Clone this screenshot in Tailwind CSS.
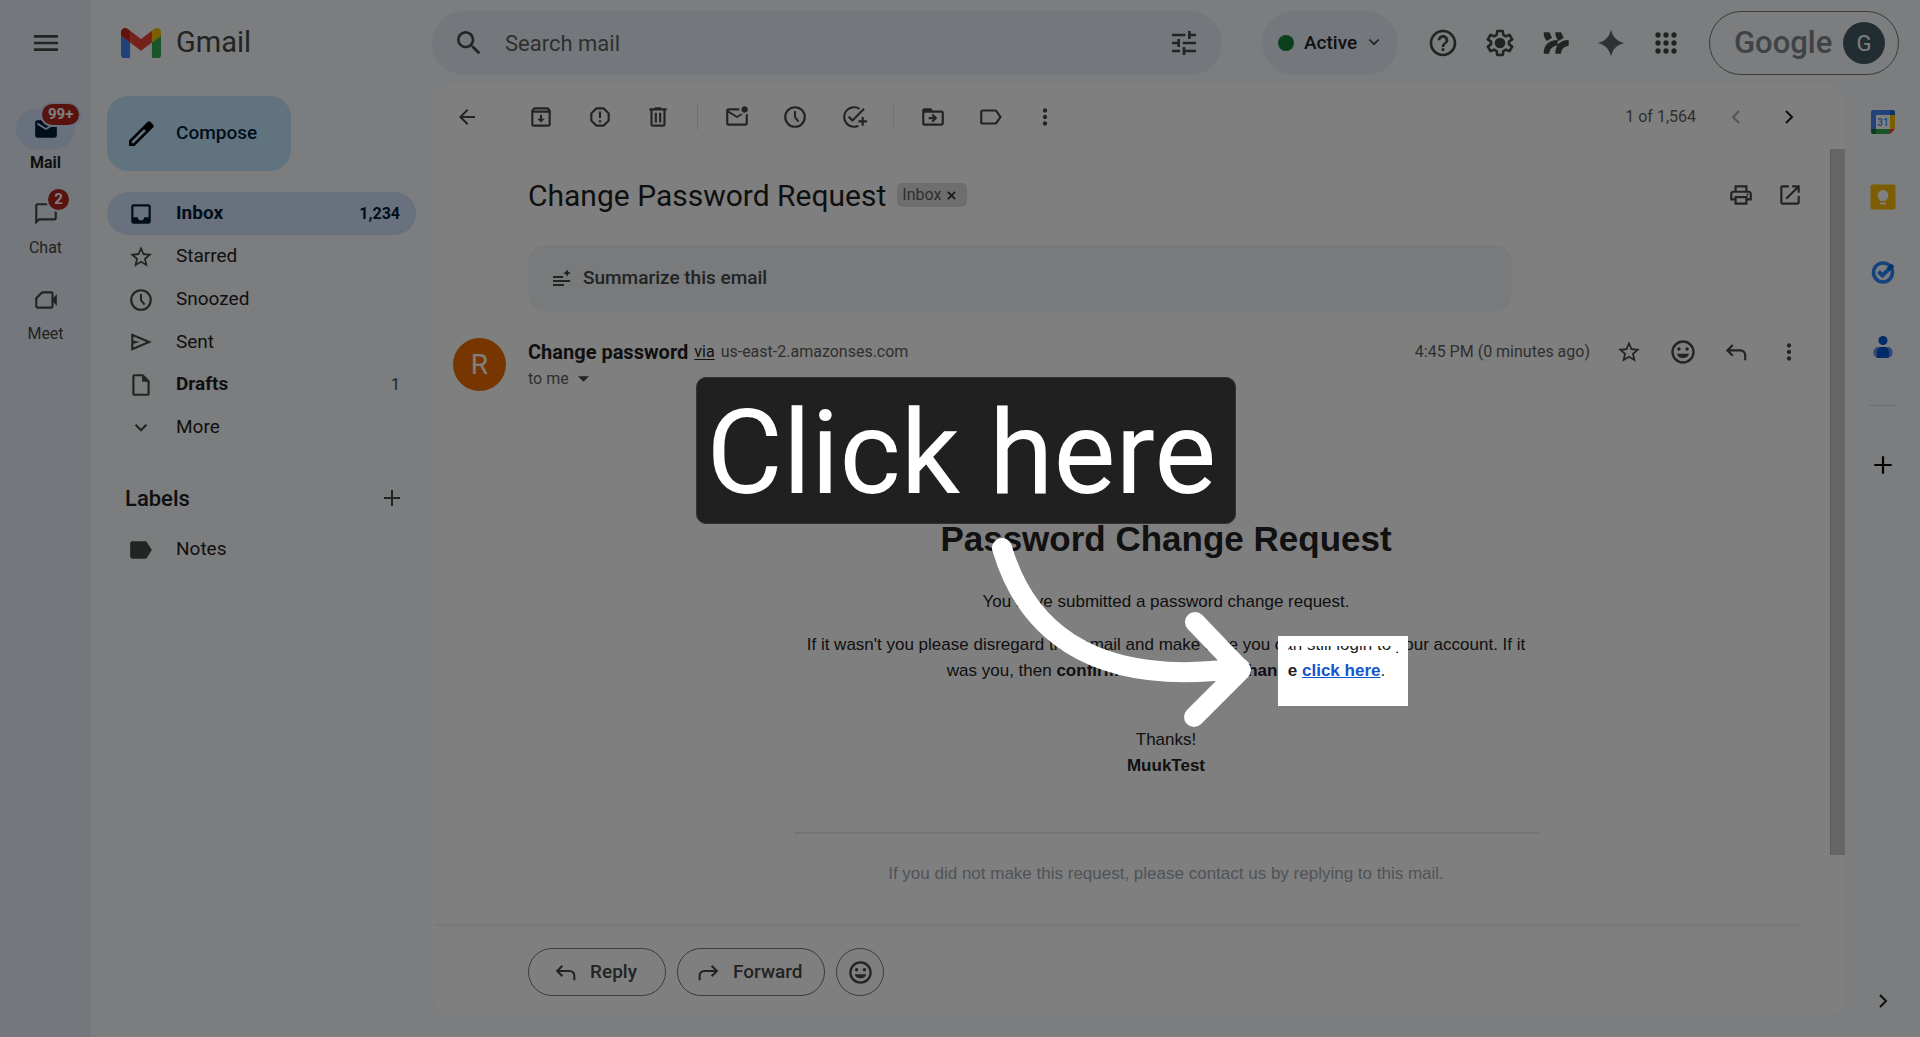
<!DOCTYPE html>
<html lang="en">
<head>
    <meta charset="UTF-8">
    <meta name="viewport" content="width=device-width, initial-scale=1">
    <title>Change Password Request - Gmail</title>
    <script src="https://cdn.jsdelivr.net/npm/@tailwindcss/browser@4"></script>
</head>
<body class="flex h-screen overflow-hidden bg-[#f8fafd] font-[Roboto,sans-serif] text-[#1f1f1f]">

    <!-- shared icons -->
    <svg class="hidden" aria-hidden="true">
        <symbol id="clock" viewBox="0 0 24 24"><circle cx="12" cy="12" r="9" fill="none" stroke="currentColor" stroke-width="2"/><path d="M12 6.500v5.700l3.300 4" fill="none" stroke="currentColor" stroke-width="1.800"/></symbol>
        <symbol id="star" viewBox="0 0 24 24"><path d="M22 9.240l-7.190-.62L12 2 9.190 8.630 2 9.240l5.460 4.730L5.820 21 12 17.270 18.180 21l-1.630-7.030L22 9.240zM12 15.400l-3.760 2.270 1-4.280-3.320-2.880 4.380-.38L12 6.100l1.710 4.040 4.380.38-3.320 2.880 1 4.280L12 15.400z"/></symbol>
        <symbol id="dots" viewBox="0 0 24 24"><circle cx="12" cy="6" r="2"/><circle cx="12" cy="12" r="2"/><circle cx="12" cy="18" r="2"/></symbol>
        <symbol id="smile" viewBox="0 0 24 24"><circle cx="12" cy="12" r="9" fill="none" stroke="currentColor" stroke-width="2"/><circle cx="8.500" cy="9.500" r="1.500"/><circle cx="15.500" cy="9.500" r="1.500"/><path d="M6.800 13.500h10.400a5.300 4.500 0 0 1-10.400 0z"/></symbol>
        <symbol id="reply" viewBox="0 0 24 24"><path d="M9 5.500L4 10.500l5 5M4.500 10.500H16a4.500 4.500 0 0 1 4.500 4.500v4.500" fill="none" stroke="currentColor" stroke-width="2"/></symbol>
        <symbol id="next" viewBox="0 0 24 24"><path d="M9 6l6 6-6 6" fill="none" stroke="currentColor" stroke-width="2"/></symbol>
        <symbol id="plus" viewBox="0 0 24 24"><path d="M11 4h2v7h7v2h-7v7h-2v-7H4v-2h7z"/></symbol>
    </svg>

    <!-- app rail -->
    <aside class="flex w-[91px] shrink-0 flex-col items-center bg-[#e9eef6] text-[16px] text-[#444746]">
        <button aria-label="Main menu" class="mt-[27px] mb-[50px]">
            <svg class="size-8" viewBox="0 0 24 24" fill="currentColor"><path d="M3 18h18v-2H3v2zm0-5h18v-2H3v2zm0-7v2h18V6H3z"/></svg>
        </button>
        <a href="#mail" class="relative flex h-[85px] flex-col items-center font-bold text-[#1f1f1f]">
            <span class="flex h-10 w-[59px] items-center justify-center rounded-full bg-[#d3e3fd] text-[#001d35]">
                <svg class="size-[26px]" viewBox="0 0 24 24" fill="currentColor"><path d="M20 4H4c-1.100 0-1.990.9-1.990 2L2 18c0 1.100.9 2 2 2h16c1.100 0 2-.9 2-2V6c0-1.100-.9-2-2-2zm0 4l-8 5-8-5V6l8 5 8-5v2z"/></svg>
            </span>
            <span class="mt-1 leading-[20px]">Mail</span>
            <span class="absolute -top-[5px] left-[26px] rounded-full bg-[#b3261e] px-[6px] text-[15px] leading-[21px] text-white ring-2 ring-[#d3e3fd]">99+</span>
        </a>
        <a href="#chat" class="relative flex h-[86px] flex-col items-center">
            <span class="flex h-10 w-[59px] items-center justify-center">
                <svg class="size-[26px]" viewBox="0 0 24 24" fill="currentColor"><path d="M4 4h16v12H5.170L4 17.170V4m0-2c-1.100 0-1.990.9-1.990 2L2 22l4-4h14c1.100 0 2-.9 2-2V4c0-1.100-.9-2-2-2H4z"/></svg>
            </span>
            <span class="mt-1 leading-[20px]">Chat</span>
            <span class="absolute -top-[5px] left-[32px] w-[21px] rounded-full bg-[#b3261e] text-center text-[15px] font-bold leading-[21px] text-white ring-2 ring-[#e9eef6]">2</span>
        </a>
        <a href="#meet" class="flex flex-col items-center">
            <span class="flex h-10 w-[59px] items-center justify-center">
                <svg class="size-[26px]" viewBox="0 0 24 24" fill="currentColor"><path d="M8 4h9a2 2 0 0 1 2 2v12a2 2 0 0 1-2 2H4a2 2 0 0 1-2-2v-8zm.8 2L4 10.800V18h13V6z" fill-rule="evenodd"/><path d="M18 11l4-4.500v11L18 13z"/></svg>
            </span>
            <span class="mt-1 leading-[20px]">Meet</span>
        </a>
    </aside>

    <!-- mailbox nav -->
    <nav class="flex w-[341px] shrink-0 flex-col pr-4 pl-4 text-[19px]">
        <a href="#" class="mt-[22px] ml-[14px] flex h-[42px] items-center gap-[15px] text-[29px] text-[#444746]">
            <svg class="h-[30px] w-10" viewBox="52 42 88 66"><path fill="#4285f4" d="M58 108h14V74L52 59v43c0 3.320 2.690 6 6 6"/><path fill="#34a853" d="M120 108h14c3.320 0 6-2.690 6-6V59l-20 15"/><path fill="#fbbc04" d="M120 48v26l20-15v-8c0-7.420-8.470-11.650-14.400-7.200"/><path fill="#ea4335" d="M72 74V48l24 18 24-18v26L96 92"/><path fill="#c5221f" d="M52 51v8l20 15V48l-5.600-4.200c-5.940-4.450-14.400-.22-14.400 7.200"/></svg>
            Gmail
        </a>
        <button class="mt-8 flex h-[75px] w-[184px] items-center gap-[19px] rounded-[21px] bg-[#c2e7ff] pl-[18px] font-medium text-[#001d35]">
            <svg class="size-8 text-black" viewBox="0 0 24 24" fill="currentColor"><path d="M3 21v-4.200L16.600 3.200a1.900 1.900 0 0 1 2.800 0l1.400 1.400a1.900 1.900 0 0 1 0 2.800L7.200 21H3zm2-2h1.400l9.300-9.300-1.400-1.400L5 17.600V19z" fill-rule="evenodd"/></svg>
            Compose
        </button>
        <ul class="mt-[21px]">
            <li><a href="#inbox" class="flex h-[43px] items-center gap-[22px] rounded-full bg-[#d3e3fd] pr-4 pl-[21px] font-bold text-[#001d35]">
                <svg class="size-[26px]" viewBox="0 0 24 24" fill="currentColor"><path d="M19 3H5c-1.100 0-2 .9-2 2v14c0 1.100.9 2 2 2h14c1.100 0 2-.9 2-2V5c0-1.100-.9-2-2-2zm0 12h-4c0 1.660-1.350 3-3 3s-3-1.340-3-3H5V5h14v10z"/></svg>
                <span class="flex-1">Inbox</span><span class="text-[16px]">1,234</span></a></li>
            <li><a href="#starred" class="flex h-[43px] items-center gap-[22px] pr-4 pl-[21px]">
                <svg class="size-[26px] text-[#444746]" fill="currentColor"><use href="#star"/></svg>Starred</a></li>
            <li><a href="#snoozed" class="flex h-[43px] items-center gap-[22px] pr-4 pl-[21px]">
                <svg class="size-[26px] text-[#444746]" fill="currentColor"><use href="#clock"/></svg>Snoozed</a></li>
            <li><a href="#sent" class="flex h-[42px] items-center gap-[22px] pr-4 pl-[21px]">
                <svg class="size-[26px] text-[#444746]" viewBox="0 0 24 24" fill="currentColor"><path d="M3 4v16l19-8zm2 3l12 5-12 5v-3.500l6-1.500-6-1.500z" fill-rule="evenodd"/></svg>Sent</a></li>
            <li><a href="#drafts" class="flex h-[43px] items-center gap-[22px] pr-4 pl-[21px] font-bold">
                <svg class="size-[26px] text-[#444746]" viewBox="0 0 24 24" fill="currentColor"><path d="M14 2H6a2 2 0 0 0-2 2v16a2 2 0 0 0 2 2h12a2 2 0 0 0 2-2V8zM6 20V4h7v5h5v11z" fill-rule="evenodd"/></svg>
                <span class="flex-1">Drafts</span><span class="text-[16px] font-normal text-[#444746]">1</span></a></li>
            <li><button class="flex h-[43px] w-full items-center gap-[22px] pr-4 pl-[21px]">
                <svg class="size-[26px] text-[#444746]" viewBox="0 0 24 24"><path d="M7 9l5 5 5-5" fill="none" stroke="currentColor" stroke-width="2"/></svg>More</button></li>
        </ul>
        <div class="mt-7 flex h-[42px] items-center justify-between pr-3 pl-[18px]">
            <h2 class="text-[22px] font-medium">Labels</h2>
            <button aria-label="Create new label"><svg class="size-6 text-[#444746]" fill="currentColor"><use href="#plus"/></svg></button>
        </div>
        <a href="#notes" class="mt-[9px] flex h-[43px] items-center gap-[22px] pl-[21px]">
            <svg class="size-[26px] text-[#444746]" viewBox="0 0 24 24" fill="currentColor"><path d="M17.600 5A2 2 0 0 0 16 4H4a2 2 0 0 0-2 2v12a2 2 0 0 0 2 2h12a2 2 0 0 0 1.600-1L22 12z"/></svg>Notes</a>
    </nav>

    <div class="flex min-w-0 flex-1 flex-col">
        <!-- top bar -->
        <header class="flex h-[85px] shrink-0 items-start pt-[11px] pr-[21px] text-[#444746]">
            <form class="mr-10 flex h-16 max-w-[791px] flex-1 items-center rounded-full bg-[#e9eef6] pr-[22px] pl-[21px]">
                <button type="button" aria-label="Search"><svg class="size-8" viewBox="0 0 24 24" fill="currentColor"><path d="M15.500 14h-.79l-.28-.27A6.471 6.471 0 0 0 16 9.500 6.500 6.500 0 1 0 9.500 16c1.610 0 3.090-.59 4.230-1.570l.27.28v.79l5 4.990L20.490 19l-4.990-5zm-6 0C7.010 14 5 11.990 5 9.500S7.010 5 9.500 5 14 7.010 14 9.500 11.990 14 9.500 14z"/></svg></button>
                <input type="text" aria-label="Search mail" placeholder="Search mail" class="ml-[20px] min-w-0 flex-1 bg-transparent text-[22px] placeholder:text-[#5c5f5e]">
                <button type="button" aria-label="Show search options"><svg class="size-8" viewBox="0 0 24 24" fill="currentColor"><path d="M3 17v2h6v-2H3zM3 5v2h10V5H3zm10 16v-2h8v-2h-8v-2h-2v6h2zM7 9v2H3v2h4v2h2V9H7zm14 4v-2H11v2h10zm-6-4h2V7h4V5h-4V3h-2v6z"/></svg></button>
            </form>
            <button class="ml-auto flex h-16 w-[136px] shrink-0 items-center rounded-full bg-[#e9eef6] pl-4 text-[19px] font-medium text-[#1f1f1f]">
                <span class="mr-[10px] size-4 rounded-full bg-[#188038]"></span>Active
                <svg class="ml-[10px] size-[14px] text-[#444746]" viewBox="0 0 24 24"><path d="M4 6l8 8 8-8" fill="none" stroke="currentColor" stroke-width="3"/></svg>
            </button>
            <div class="ml-4 flex h-16 shrink-0 items-center">
                <button aria-label="Support" class="flex w-[57px] justify-center"><svg class="size-8" viewBox="0 0 24 24" fill="currentColor"><path d="M11 18h2v-2h-2v2zm1-16C6.480 2 2 6.480 2 12s4.480 10 10 10 10-4.480 10-10S17.520 2 12 2zm0 18c-4.410 0-8-3.590-8-8s3.590-8 8-8 8 3.590 8 8-3.590 8-8 8zm0-14c-2.210 0-4 1.790-4 4h2c0-1.100.9-2 2-2s2 .9 2 2c0 2-3 1.750-3 5h2c0-2.250 3-2.500 3-5 0-2.210-1.790-4-4-4z"/></svg></button>
                <button aria-label="Settings" class="flex w-[57px] justify-center"><svg class="size-8" viewBox="0 0 24 24"><path d="M10 3h4l.5 2.900 1.900 1.100 2.700-1.100 2 3.400-2.300 1.700v2l2.300 1.700-2 3.400-2.700-1.100-1.900 1.100L14 21h-4l-.5-2.900L7.600 17l-2.700 1.100-2-3.400L5.200 13v-2L2.900 9.300l2-3.400L7.600 7l1.900-1.100z" fill="none" stroke="currentColor" stroke-width="2" stroke-linejoin="round"/><circle cx="12" cy="12" r="4" fill="currentColor"/></svg></button>
                <button aria-label="Extensions" class="flex w-[55px] justify-center">
                    <svg class="h-[22px] w-[26px]" viewBox="0 0 76 66" fill="currentColor"><path d="M1 1h17l8 16-15 10C4 21 1 12 1 1zM36 1h17l8 16-15 10C39 21 36 12 36 1zM1 65c0-25 14-40 42-41v16c-17 4-24 12-25 25zM36 65c0-25 13-40 40-41v17c-16 3-22 11-23 24z"/></svg>
                </button>
                <button aria-label="Ask Gemini" class="flex w-[55px] justify-center"><svg class="size-8 text-[#5f6368]" viewBox="0 0 24 24" fill="currentColor"><path d="M12 2c1.300 5.500 4.500 8.700 10 10-5.500 1.300-8.700 4.500-10 10-1.300-5.500-4.500-8.700-10-10 5.500-1.300 8.700-4.500 10-10z"/></svg></button>
                <button aria-label="Google apps" class="flex w-[55px] justify-center"><svg class="size-8" viewBox="0 0 24 24" fill="currentColor"><circle cx="6" cy="6" r="2"/><circle cx="12" cy="6" r="2"/><circle cx="18" cy="6" r="2"/><circle cx="6" cy="12" r="2"/><circle cx="12" cy="12" r="2"/><circle cx="18" cy="12" r="2"/><circle cx="6" cy="18" r="2"/><circle cx="12" cy="18" r="2"/><circle cx="18" cy="18" r="2"/></svg></button>
            </div>
            <button class="ml-4 flex h-16 w-[190px] shrink-0 items-center justify-between rounded-full border border-[#747775] pr-[13px] pl-6">
                <span class="text-[31px] leading-9 font-medium text-[#80868b]">Google</span>
                <span class="flex size-[42px] items-center justify-center rounded-full bg-[#455a64] text-[22px] text-white">G</span>
            </button>
        </header>

        <div class="flex min-h-0 flex-1">
            <main class="mb-[21px] flex min-w-0 flex-1 flex-col rounded-[21px] bg-white">
                <!-- message toolbar -->
                <div class="flex h-16 shrink-0 items-center pr-[30px] pl-[6px] text-[#444746]">
                    <button aria-label="Back to Inbox" class="mr-4 flex w-[58px] justify-center"><svg class="size-6" viewBox="0 0 24 24" fill="currentColor"><path d="M20 11H7.830l5.590-5.590L12 4l-8 8 8 8 1.410-1.410L7.830 13H20v-2z"/></svg></button>
                    <button aria-label="Archive" class="flex w-[58px] justify-center"><svg class="size-[26px]" viewBox="0 0 24 24" fill="currentColor"><path d="M20.540 5.230l-1.390-1.680C18.880 3.210 18.470 3 18 3H6c-.47 0-.88.21-1.160.55L3.460 5.230C3.170 5.570 3 6.020 3 6.500V19c0 1.100.9 2 2 2h14c1.100 0 2-.9 2-2V6.500c0-.48-.17-.93-.46-1.270zM6.240 5h11.520l.83 1H5.420l.82-1zM5 19V8h14v11H5zm8-9h-2v3.500H8.500L12 17l3.500-3.500H13z"/></svg></button>
                    <button aria-label="Report spam" class="flex w-[59px] justify-center"><svg class="size-[26px]" viewBox="0 0 24 24" fill="currentColor"><path d="M15.730 3H8.270L3 8.270v7.460L8.270 21h7.460L21 15.730V8.270L15.730 3zM19 14.900L14.900 19H9.100L5 14.900V9.100L9.100 5h5.800L19 9.100v5.800zM11 7h2v6h-2zM11 15h2v2h-2z"/></svg></button>
                    <button aria-label="Delete" class="flex w-[58px] justify-center"><svg class="size-[26px]" viewBox="0 0 24 24" fill="currentColor"><path d="M15 4V3H9v1H4v2h1v13c0 1.100.9 2 2 2h10c1.100 0 2-.9 2-2V6h1V4h-5zm2 15H7V6h10v13zM9 8h2v9H9zm4 0h2v9h-2z"/></svg></button>
                    <span class="mx-[10px] h-[26px] w-px bg-[#e0e0e0]"></span>
                    <button aria-label="Mark as unread" class="flex w-[58px] justify-center"><svg class="size-[26px]" viewBox="0 0 24 24" fill="currentColor"><path d="M22 8.980V18c0 1.100-.9 2-2 2H4c-1.100 0-2-.9-2-2V6c0-1.100.9-2 2-2h10.100c-.06.32-.1.66-.1 1s.04.68.1 1H4l8 5 3.670-2.290c.47.43 1.020.76 1.630.98L12 13 4 8v10h16V9.900c.74-.15 1.420-.48 2-.92zM16 5c0 1.660 1.340 3 3 3s3-1.340 3-3-1.340-3-3-3-3 1.340-3 3z"/></svg></button>
                    <button aria-label="Snooze" class="flex w-[58px] justify-center"><svg class="size-[26px]" fill="currentColor"><use href="#clock"/></svg></button>
                    <button aria-label="Add to tasks" class="flex w-[59px] justify-center"><svg class="size-[26px]" viewBox="0 0 24 24" fill="currentColor"><path d="M22 5.180L10.590 16.600l-4.240-4.240 1.410-1.410 2.830 2.830 10-10L22 5.180zM12 20c-4.410 0-8-3.590-8-8s3.590-8 8-8c1.570 0 3.040.46 4.280 1.250l1.450-1.450C16.100 2.670 14.130 2 12 2 6.480 2 2 6.480 2 12s4.480 10 10 10c1.730 0 3.360-.44 4.780-1.220l-1.500-1.500c-1 .46-2.110.72-3.280.72zm7-5h-3v2h3v3h2v-3h3v-2h-3v-3h-2v3z"/></svg></button>
                    <span class="mx-[10px] h-[26px] w-px bg-[#e0e0e0]"></span>
                    <button aria-label="Move to" class="flex w-[58px] justify-center"><svg class="size-[26px]" viewBox="0 0 24 24" fill="currentColor"><path d="M20 6h-8l-2-2H4c-1.100 0-2 .9-2 2v12c0 1.100.9 2 2 2h16c1.100 0 2-.9 2-2V8c0-1.100-.9-2-2-2zm0 12H4V8h16v10zm-7.840-6H8v2h4.160l-1.590 1.590L11.990 17 16 13.010 11.990 9l-1.410 1.410L12.160 12z"/></svg></button>
                    <button aria-label="Labels" class="flex w-[58px] justify-center"><svg class="size-[26px]" viewBox="0 0 24 24" fill="currentColor"><path d="M17.630 5.840C17.270 5.330 16.670 5 16 5L5 5.010C2.900 5.010 2 5.900 2 7v10c0 1.100.9 1.990 2 1.990L16 19c.67 0 1.270-.33 1.630-.84L22 12l-4.370-6.160zM16 17H4V7h12l3.550 5L16 17z"/></svg></button>
                    <button aria-label="More" class="flex w-[50px] justify-center"><svg class="size-[26px]" fill="currentColor"><use href="#dots"/></svg></button>
                    <span class="mr-[13px] ml-auto text-[16px] text-[#5e5e5e]">1 of 1,564</span>
                    <button aria-label="Newer" class="flex w-[53px] justify-center text-[#a8a8a8]" disabled><svg class="size-6 rotate-180" fill="currentColor"><use href="#next"/></svg></button>
                    <button aria-label="Older" class="flex w-[53px] justify-center text-[#1f1f1f]"><svg class="size-6" fill="currentColor"><use href="#next"/></svg></button>
                </div>

                <div class="flex min-h-0 flex-1">
                    <div class="min-w-0 flex-1">
                        <div class="flex h-[92px] items-center pr-[14px] pl-24">
                            <h1 class="text-[30px]">Change Password Request</h1>
                            <button class="ml-[11px] flex h-6 items-center rounded-[5px] bg-[#ddd] px-[5px] text-[16px] text-[#5e5e5e]">Inbox
                                <svg class="mx-[6px] size-[9px]" viewBox="0 0 10 10"><path d="M1 1l8 8M9 1l-8 8" stroke="#333" stroke-width="2"/></svg>
                            </button>
                            <button aria-label="Print all" class="ml-auto flex w-11 justify-center text-[#444746]"><svg class="size-[26px]" viewBox="0 0 24 24" fill="currentColor"><path d="M19 8h-1V3H6v5H5c-1.660 0-3 1.340-3 3v6h4v4h12v-4h4v-6c0-1.660-1.340-3-3-3zM8 5h8v3H8V5zm8 14H8v-4h8v4zm2-4v-2H6v2H4v-4c0-.55.45-1 1-1h14c.55 0 1 .45 1 1v4h-2z"/><circle cx="18" cy="11.500" r="1"/></svg></button>
                            <button aria-label="In new window" class="flex w-[53px] justify-center text-[#444746]"><svg class="size-[26px]" viewBox="0 0 24 24" fill="currentColor"><path d="M19 19H5V5h6V3H5c-1.100 0-2 .9-2 2v14c0 1.100.9 2 2 2h14c1.100 0 2-.9 2-2v-6h-2v6zM14 3v2h3.590l-9.830 9.830 1.410 1.410L19 6.410V10h2V3h-7z"/></svg></button>
                        </div>
                        <button class="mt-1 ml-24 flex h-[67px] w-[calc(100%-414px)] items-center gap-[10px] rounded-[18px] bg-[#f0f4f9] pl-[23px] text-[19px] font-medium text-[#444746]">
                            <svg class="size-[22px]" viewBox="0 0 22 22" fill="currentColor"><path d="M2 8h10v2H2zM2 12h17v2H2zM2 16h11v2H2zM16 1q.6 3.400 4 4-3.400.6-4 4-.6-3.400-4-4 3.400-.6 4-4z"/></svg>
                            Summarize this email
                        </button>

                        <!-- sender -->
                        <div class="mt-[26px] flex pr-[14px] pl-[21px] text-[16px] text-[#5e5e5e]">
                            <span class="mr-[22px] flex size-[53px] items-center justify-center rounded-full bg-[#ef6c00] text-[28px] text-white">R</span>
                            <div>
                                <p class="flex items-center gap-[6px] leading-7"><b class="text-[20px] text-[#1f1f1f]">Change password</b><a href="#" class="text-[#222] underline underline-offset-2">via</a><span>us-east-2.amazonses.com</span></p>
                                <button class="flex h-[26px] items-center gap-[9px]">to me <svg class="h-[6px] w-[11px]" viewBox="0 0 10 5" fill="#444746"><path d="M0 0h10L5 5z"/></svg></button>
                            </div>
                            <div class="ml-auto flex h-7 items-center text-[#444746]">
                                <span class="mr-3 text-[#5e5e5e]">4:45 PM (0 minutes ago)</span>
                                <button aria-label="Not starred" class="flex w-[54px] justify-center"><svg class="size-[26px]" fill="currentColor"><use href="#star"/></svg></button>
                                <button aria-label="Add reaction" class="flex w-[53px] justify-center"><svg class="size-7" fill="currentColor"><use href="#smile"/></svg></button>
                                <button aria-label="Reply" class="flex w-[53px] justify-center"><svg class="size-[26px]" fill="currentColor"><use href="#reply"/></svg></button>
                                <button aria-label="More" class="flex w-[54px] justify-center"><svg class="size-[26px]" fill="currentColor"><use href="#dots"/></svg></button>
                            </div>
                        </div>

                        <!-- message body -->
                        <div class="mr-[26px] ml-24">
                            <article class="relative mx-auto max-w-[745px] pt-[126px] text-center font-['Liberation_Sans',Arial,sans-serif] text-[17px] leading-[26px] text-[#222]">
                                <h2 class="text-[35px] leading-[42px] font-bold">Password Change Request</h2>
                                <p class="mt-[29px]">You have submitted a password change request.</p>
                                <p class="mt-[17px]">If it wasn't you please disregard this email and make sure you can still login to your account. If it was you, then <b>confirm the password change <a href="#confirm" class="relative inline-block text-[#1155cc] underline">click here<span class="absolute -top-[22px] -right-7 -bottom-[22px] -left-6 z-10 border-10 border-white shadow-[0_0_0_2400px_rgba(0,0,0,0.5)]"></span></a></b>.</p>
                                <p class="mt-[43px]">Thanks!<br><b>MuukTest</b></p>
                                <hr class="mt-[53px] border-t-2 border-[#eaeaea]">
                                <p class="mt-[27px] text-[#a0a7b0]">If you did not make this request, please contact us by replying to this mail.</p>

                                <!-- callout -->
                                <div class="absolute -top-[15px] -left-[98px] z-20 h-[147px] w-[540px] rounded-[10px] border border-[#333] bg-[#202020] pt-[5px] pl-[10px] text-left font-[Roboto,sans-serif] text-[117px] leading-[140px] whitespace-nowrap text-white">Click here</div>
                                <svg class="absolute top-[143px] left-[186px] z-20 h-[200px] w-[280px]" viewBox="980 535 280 200" fill="none" stroke="#fff" stroke-width="20" stroke-linecap="round" stroke-linejoin="round"><path d="M1002 548C1023 620 1082 690 1240 668M1195 622L1241 670L1194 717"/></svg>
                            </article>
                        </div>

                        <div class="mt-[37px] mr-[30px] ml-[3px] border-t-2 border-[#f0f0f0]"></div>
                        <div class="mt-[22px] flex gap-[11px] pl-24 text-[19px] font-medium text-[#444746]">
                            <button class="flex h-12 items-center gap-3 rounded-full border border-[#747775] pr-7 pl-6"><svg class="size-[25px]" fill="currentColor"><use href="#reply"/></svg>Reply</button>
                            <button class="flex h-12 items-center gap-3 rounded-full border border-[#747775] pr-[22px] pl-[18px]"><svg class="size-[25px] -scale-x-100" fill="currentColor"><use href="#reply"/></svg>Forward</button>
                            <button aria-label="Add reaction" class="flex size-12 items-center justify-center rounded-full border border-[#747775]"><svg class="size-[27px]" fill="currentColor"><use href="#smile"/></svg></button>
                        </div>
                    </div>
                    <div class="w-[15px] shrink-0"><div class="h-[706px] border-l border-[#b8b8b8] bg-[#cdcdcd]"></div></div>
                </div>
            </main>

            <!-- side panel -->
            <aside class="flex w-[75px] shrink-0 flex-col items-center pt-[24px] pb-4">
                <button aria-label="Calendar" class="mb-[49px]">
                    <svg class="size-[26px]" viewBox="0 0 26 26"><path fill="#fff" d="M6 6h14v14H6z"/><path fill="#4285f4" d="M1 20V3a2 2 0 0 1 2-2h17v5H6v14z"/><path fill="#1967d2" d="M20 6V1h3a2 2 0 0 1 2 2v3z"/><path fill="#fbbc04" d="M20 6h5v14h-5z"/><path fill="#34a853" d="M6 20h14v5H6z"/><path fill="#188038" d="M1 20h5v5H3a2 2 0 0 1-2-2z"/><path fill="#ea4335" d="M20 20h5l-5 5z"/><text x="13" y="17" text-anchor="middle" font-size="10" font-family="Roboto" font-weight="500" fill="#4285f4">31</text></svg>
                </button>
                <button aria-label="Keep" class="mb-[49px]">
                    <svg class="size-[26px]" viewBox="0 0 26 26"><rect x="0.500" y="0.500" width="25" height="25" rx="2" fill="#fbbc04"/><path fill="#fff" d="M13 6a5.500 5.500 0 0 1 3 10v1h-6v-1a5.500 5.500 0 0 1 3-10zM10 18.500h6v2h-6z"/></svg>
                </button>
                <button aria-label="Tasks" class="mb-[49px]">
                    <svg class="size-[26px]" viewBox="0 0 26 26" fill="none"><circle cx="13" cy="13.500" r="9.500" stroke="#2684fc" stroke-width="3.500"/><path d="M8.500 12.500l4 4L23 6" stroke="#2684fc" stroke-width="4"/><path d="M18.500 10.500l4-4" stroke="#0066da" stroke-width="4"/></svg>
                </button>
                <button aria-label="Contacts" class="mb-[45px]">
                    <svg class="size-[26px]" viewBox="0 0 26 26"><circle cx="13" cy="6.500" r="4.500" fill="#0057cc"/><rect x="3.500" y="13" width="19" height="11" rx="5" fill="#5c8df0"/><path d="M7 24v-6a5 5 0 0 1 5-5h2a5 5 0 0 1 5 5v3a3 3 0 0 1-3 3z" fill="#0057cc"/></svg>
                </button>
                <span class="h-px w-7 bg-[#dadce0]"></span>
                <button aria-label="Get add-ons" class="mt-[46px]"><svg class="size-[26px] text-black" fill="currentColor"><use href="#plus"/></svg></button>
                <button aria-label="Hide side panel" class="mt-auto mb-2"><svg class="size-6 text-[#1f1f1f]"><use href="#next"/></svg></button>
            </aside>
        </div>
    </div>
</body>
</html>
